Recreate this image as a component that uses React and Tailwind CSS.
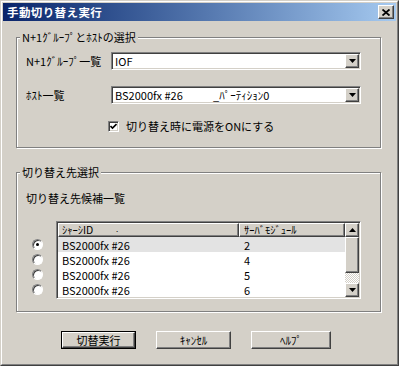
const raised =
  "border border-t-white border-l-white border-r-[#404040] border-b-[#404040] shadow-[inset_-1px_-1px_0_#808080] bg-[#d4d0c8]";
const sunken =
  "border border-t-[#808080] border-l-[#808080] border-r-white border-b-white shadow-[inset_1px_1px_0_#404040,inset_-1px_-1px_0_#d4d0c8]";

function Arrow({ up }) {
  return (
    <svg width="7" height="4" viewBox="0 0 7 4">
      <path d={up ? "M0 4 L3.5 0 L7 4 Z" : "M0 0 L7 0 L3.5 4 Z"} fill="#000" />
    </svg>
  );
}

function Combo({ children }) {
  return (
    <div className={`${sunken} bg-white w-[250px] h-[18px] flex items-center p-[1px]`}>
      <div className="flex-1 pl-[2px] flex items-center leading-[13px]">{children}</div>
      <div className={`${raised} w-[14px] h-[14px] flex items-center justify-center`}>
        <Arrow />
      </div>
    </div>
  );
}

function Group({ label, className, children }) {
  return (
    <div className={`relative border border-[#808080] shadow-[inset_1px_1px_0_#fff,1px_1px_0_#fff] w-[365px] ${className}`}>
      <span className="absolute -top-[8px] left-[3px] px-[2px] bg-[#d4d0c8] leading-[14px]">{label}</span>
      {children}
    </div>
  );
}

function Radio({ on }) {
  return (
    <div className="h-[15px] flex items-center">
      <div className="w-[11px] h-[11px] rounded-full border border-t-[#808080] border-l-[#808080] border-r-white border-b-white bg-white shadow-[inset_1px_1px_0_#404040] flex items-center justify-center">
        {on && <div className="w-[3px] h-[3px] rounded-full bg-black" />}
      </div>
    </div>
  );
}

const rows = [
  { id: "BS2000fx #26", mod: "2", sel: true },
  { id: "BS2000fx #26", mod: "4" },
  { id: "BS2000fx #26", mod: "5" },
  { id: "BS2000fx #26", mod: "6" },
];

function Btn({ w, def, children }) {
  const inner = (
    <div className={`${raised} h-full flex items-center justify-center leading-[13px]`}>{children}</div>
  );
  return def ? (
    <div className={`${w} h-[18px] border border-black`}>{inner}</div>
  ) : (
    <div className={`${w} h-[18px]`}>{inner}</div>
  );
}

export default function App() {
  return (
    <div className="w-[399px] h-[368px] bg-white font-['Noto_Sans_CJK_JP',sans-serif] text-[11px] text-black">
      <div className="w-[399px] h-[366px] bg-[#d4d0c8] border border-t-[#d4d0c8] border-l-[#d4d0c8] border-r-[#404040] border-b-[#404040]">
        <div className="h-full border border-t-white border-l-white border-r-[#808080] border-b-[#808080] p-[1px] flex flex-col">
          <div className="h-[18px] bg-gradient-to-r from-[#0a246a] to-[#a6caf0] flex items-center justify-between pl-[4px] pr-[2px]">
            <span className="text-white font-bold text-[11.5px] tracking-[0.4px] leading-[14px]">手動切り替え実行</span>
            <div className={`${raised} w-[16px] h-[14px] flex items-center justify-center`}>
              <svg width="8" height="7" viewBox="0 0 8 7">
                <path d="M0.5 0.5 L7.5 6.5 M7.5 0.5 L0.5 6.5" stroke="#000" strokeWidth="1.8" />
              </svg>
            </div>
          </div>

          <div className="pl-[13px]">
            <Group label="N+1ｸﾞﾙｰﾌﾟとﾎｽﾄの選択" className="mt-[16px] h-[111px]">
              <div className="pt-[14px] flex items-center">
                <span className="w-[94px] pl-[9px] leading-[13px]">N+1ｸﾞﾙｰﾌﾟ一覧</span>
                <Combo>IOF</Combo>
              </div>
              <div className="mt-[16px] flex items-center">
                <span className="w-[94px] pl-[9px] leading-[13px]">ﾎｽﾄ一覧</span>
                <Combo>
                  <span className="w-[98px]">BS2000fx #26</span>
                  <span>_ﾊﾟｰﾃｨｼｮﾝ0</span>
                </Combo>
              </div>
              <div className="mt-[16px] ml-[91px] flex items-center gap-[7px]">
                <div className={`${sunken} bg-white w-[11px] h-[11px] flex items-center justify-center`}>
                  <svg width="7" height="7" viewBox="0 0 7 7">
                    <path d="M0.5 3 L2.5 5 L6.5 1" stroke="#000" strokeWidth="1.6" fill="none" />
                  </svg>
                </div>
                <span className="leading-[13px]">切り替え時に電源をONにする</span>
              </div>
            </Group>

            <Group label="切り替え先選択" className="mt-[24px] h-[140px]">
              <div className="pt-[19px] pl-[9px] leading-[13px]">切り替え先候補一覧</div>
              <div className="mt-[16px] flex">
                <div className="w-[39px] pl-[15px] pt-[16px] flex flex-col">
                  {rows.map((r, i) => (
                    <Radio key={i} on={r.sel} />
                  ))}
                </div>
                <div className={`${sunken} bg-white w-[305px] h-[78px] p-[1px] flex`}>
                  <div className="flex-1 flex flex-col">
                    <div className="flex h-[14px]">
                      <div className={`${raised} w-[181px] pl-[3px] flex items-center relative overflow-hidden`}>
                        <span className="leading-[10px] text-[10.5px]">ｼｬｰｼID</span>
                        <span className="absolute left-[57px] top-[1px] leading-[8px] text-[8px]">.</span>
                      </div>
                      <div className={`${raised} flex-1 pl-[4px] flex items-center overflow-hidden`}>
                        <span className="leading-[10px] text-[10.5px]">ｻｰﾊﾞﾓｼﾞｭｰﾙ</span>
                      </div>
                    </div>
                    {rows.map((r, i) => (
                      <div key={i} className={`flex h-[15px] items-center ${r.sel ? "bg-[#e3e3e3]" : ""}`}>
                        <span className="w-[181px] pl-[4px] leading-[12px]">{r.id}</span>
                        <span className="pl-[5px] leading-[12px]">{r.mod}</span>
                      </div>
                    ))}
                  </div>
                  <div className="w-[14px] flex flex-col">
                    <div className={`${raised} h-[14px] flex items-center justify-center`}>
                      <Arrow up />
                    </div>
                    <div className={`${raised} h-[36px]`} />
                    <div className="flex-1 bg-[repeating-conic-gradient(#ffffff_0_25%,#d4d0c8_0_50%)] bg-[length:2px_2px]" />
                    <div className={`${raised} h-[14px] flex items-center justify-center`}>
                      <Arrow />
                    </div>
                  </div>
                </div>
              </div>
            </Group>

            <div className="mt-[19px] ml-[45px] flex gap-[20px]">
              <Btn w="w-[75px]" def>
                切替実行
              </Btn>
              <Btn w="w-[75px]">ｷｬﾝｾﾙ</Btn>
              <Btn w="w-[80px]">ﾍﾙﾌﾟ</Btn>
            </div>
          </div>
        </div>
      </div>
    </div>
  );
}
